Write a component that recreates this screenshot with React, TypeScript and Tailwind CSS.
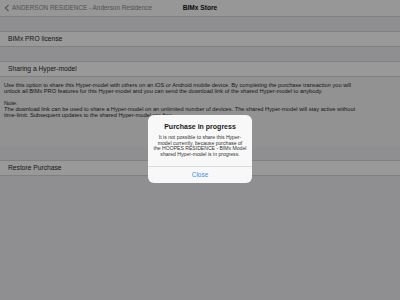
import React from "react";

const font = { fontFamily: '"Liberation Sans", Arial, sans-serif' };

function Row({ label }: { label: string }) {
  return (
    <div className="flex h-[16px] items-center border-y border-[#d6d6da] bg-white pl-[8px] text-[6.7px] text-[#2a2a2a]">
      {label}
    </div>
  );
}

export default function App() {
  return (
    <div className="relative h-[300px] w-[400px] overflow-hidden bg-[#eeeef2]" style={font}>
      <div className="flex h-[17px] items-center border-b border-[#d6d6da] bg-[#fcfcfc]">
        <div className="flex w-[160px] items-center pl-[4px] text-[6.4px] text-[#8a8a90]">
          <svg width="6" height="8" viewBox="0 0 6 8" className="mr-[2px]">
            <path d="M4.6 0.8 L1.4 4 L4.6 7.2" fill="none" stroke="#8a8a90" strokeWidth="1.1" />
          </svg>
          ANDERSON RESIDENCE - Anderson Residence
        </div>
        <div className="w-[80px] text-center text-[6.6px] font-bold text-[#111]">BIMx Store</div>
      </div>
      <div className="h-[14px]" />
      <Row label="BIMx PRO license" />
      <div className="h-[14px]" />
      <Row label="Sharing a Hyper-model" />
      <div className="h-[70px] bg-[#f4f4f6] px-[4px] pt-[5px] text-[5.7px] leading-[6px] text-[#2a2a2a]">
        Use this option to share this Hyper-model with others on an iOS or Android mobile device. By completing the purchase transaction you will
        <br />
        unlock all BIMx PRO features for this Hyper-model and you can send the download link of the shared Hyper-model to anybody.
        <br />
        <br />
        Note:
        <br />
        The download link can be used to share a Hyper-model on an unlimited number of devices. The shared Hyper-model will stay active without
        <br />
        time-limit. Subsequent updates to the shared Hyper-model are free.
      </div>
      <div className="h-[13px]" />
      <Row label="Restore Purchase" />

      <div className="absolute inset-0 bg-black/40" />

      <div className="absolute left-[148px] top-[115px] flex w-[104px] flex-col rounded-[6px] bg-[#f8f8f8] text-center">
        <div className="pt-[8px] text-[7px] font-bold leading-[8px] text-[#1a1a1a]">Purchase in progress</div>
        <div className="px-[4px] pb-[9px] pt-[4px] text-[5.1px] leading-[5.5px] text-[#333]">
          It is not possible to share this Hyper-
          <br />
          model currently, because purchase of
          <br />
          the HOOPES RESIDENCE - BIMx Model
          <br />
          shared Hyper-model is in progress.
        </div>
        <div className="flex h-[17px] items-center justify-center border-t border-[#dcdcdc] text-[6.5px] text-[#3b8cf5]">
          Close
        </div>
      </div>
    </div>
  );
}
